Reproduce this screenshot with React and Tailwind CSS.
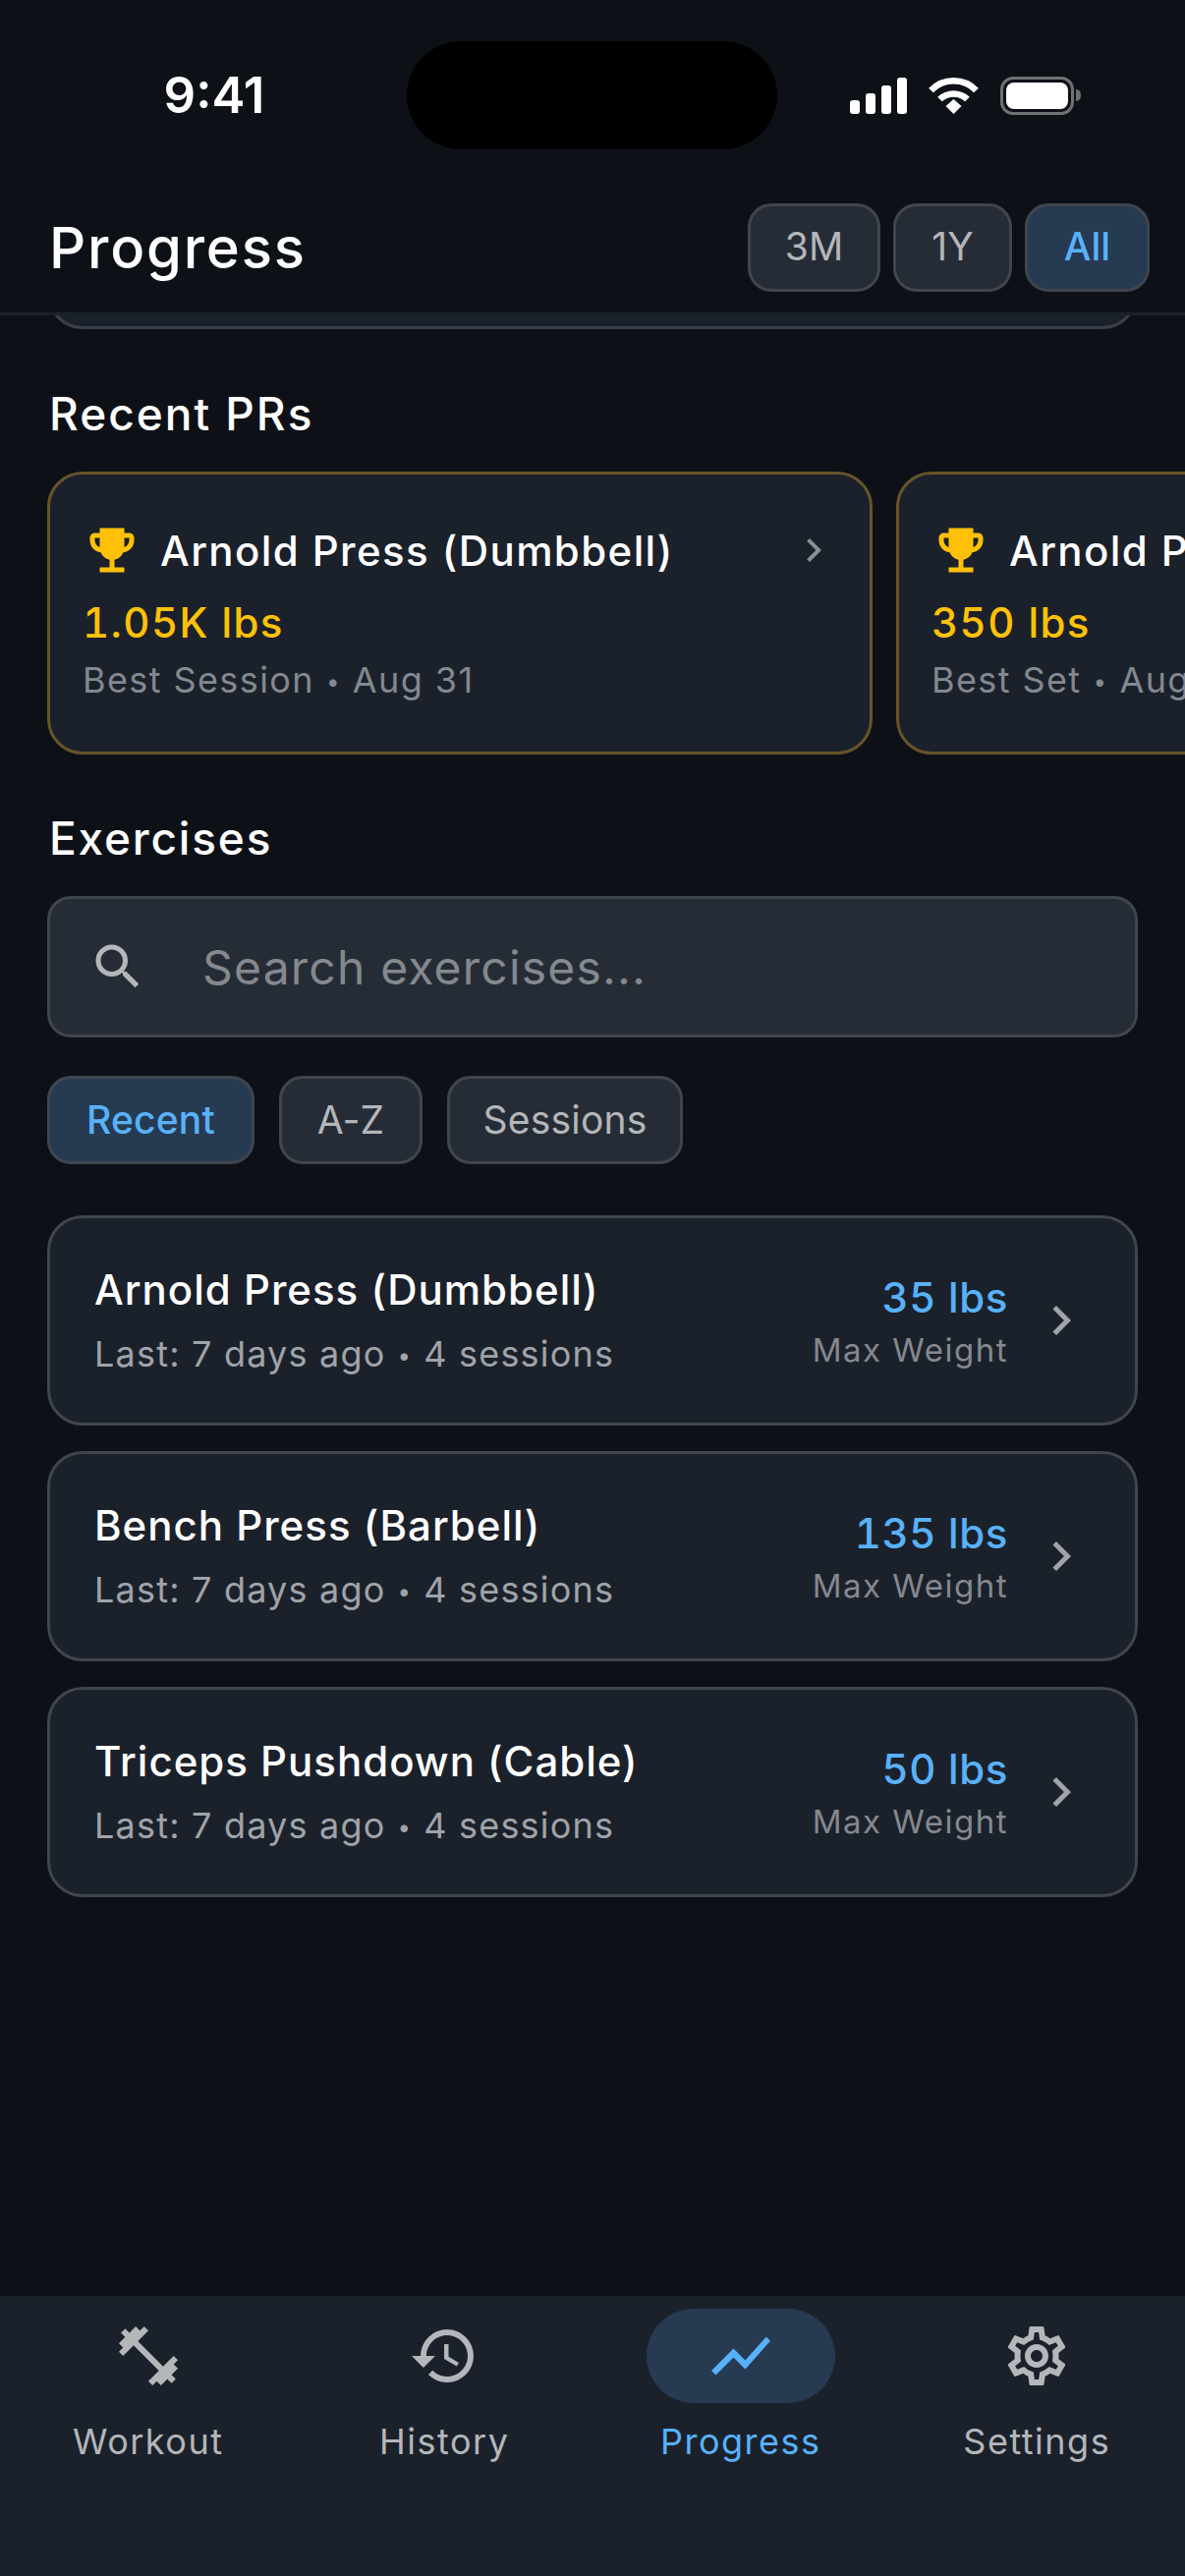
import { MdChevronRight, MdEmojiEvents, MdFitnessCenter, MdHistory, MdOutlineSettings, MdSearch, MdShowChart } from "react-icons/md";

const exercises = [
  { name: "Arnold Press (Dumbbell)", weight: "35 lbs" },
  { name: "Bench Press (Barbell)", weight: "135 lbs" },
  { name: "Triceps Pushdown (Cable)", weight: "50 lbs" },
];

const tabs = [
  { label: "Workout", Icon: MdFitnessCenter },
  { label: "History", Icon: MdHistory },
  { label: "Progress", Icon: MdShowChart, active: true },
  { label: "Settings", Icon: MdOutlineSettings },
];

function Dot() {
  return <span className="text-[24px] align-[3px] mx-[12px]">•</span>;
}

function StatusIcons() {
  return (
    <div className="flex items-center gap-[22px]">
      <svg width="58" height="37" viewBox="0 0 58 37" fill="#fff">
        <rect x="0" y="23" width="10" height="14" rx="3" />
        <rect x="16" y="16" width="10" height="21" rx="3" />
        <rect x="32" y="8" width="10" height="29" rx="3" />
        <rect x="48" y="0" width="10" height="37" rx="3" />
      </svg>
      <svg width="51" height="37" viewBox="0 0 51 37" fill="none">
        <path d="M2.5 13C15 0 36 0 48.5 13" stroke="#fff" strokeWidth="6.5" />
        <path d="M11.5 22C19 14.5 32 14.5 39.5 22" stroke="#fff" strokeWidth="6.5" />
        <path d="M17.5 29L25.5 22L33.5 29L25.5 37Z" fill="#fff" />
      </svg>
      <div className="flex items-center gap-[2px]">
        <div className="w-[75px] h-[39px] rounded-[13px] border-[3px] border-[#6e7074] p-[3px]">
          <div className="w-full h-full rounded-[8px] bg-white" />
        </div>
        <div className="w-[5px] h-[12px] rounded-r-full bg-[#6e7074]" />
      </div>
    </div>
  );
}

function RangeButton({ label, active, width }) {
  return (
    <button
      className={`h-[90px] ${width} rounded-[24px] border-[3px] border-[#40454e] text-[39px] pb-[2px] ${
        active ? "bg-[#263a52] text-[#58b1f9] font-medium" : "bg-[#262c36] text-[#b4b6ba]"
      }`}
    >
      {label}
    </button>
  );
}

function PrCard({ value, sub, date }) {
  return (
    <div className="w-[840px] h-[288px] shrink-0 rounded-[36px] border-[3px] border-[#66542a] bg-[#1b212b] pl-[33px] pr-[33px] pt-[47px]">
      <div className="flex items-center h-[60px]">
        <MdEmojiEvents size={60} className="text-[#ffc107] shrink-0" />
        <span className="ml-[19px] text-[42px] font-medium text-white tracking-[1.4px] whitespace-nowrap">Arnold Press (Dumbbell)</span>
        <MdChevronRight size={48} className="ml-auto text-[#8b8f96] shrink-0" />
      </div>
      <p className="mt-[17px] text-[42px] leading-[54px] font-medium text-[#ffc107] tracking-[1.4px] tabular-nums whitespace-nowrap">{value}</p>
      <p className="mt-[7px] text-[36px] leading-[48px] text-[#84888f] tracking-[1.4px] whitespace-nowrap">
        {sub}
        <Dot />
        {date}
      </p>
    </div>
  );
}

function Chip({ label, active, width }) {
  return (
    <button
      className={`h-[90px] ${width} rounded-[24px] border-[3px] border-[#40454e] text-[39px] tracking-[0.2px] ${
        active ? "bg-[#263a52] text-[#58b1f9] font-medium" : "bg-[#262c36] text-[#b4b6ba]"
      }`}
    >
      {label}
    </button>
  );
}

export default function App() {
  return (
    <div className="w-[1206px] h-[2622px] overflow-hidden flex flex-col bg-[#0d1117] font-['Inter',sans-serif]">
      {/* header */}
      <div className="h-[321px] shrink-0 border-b-[3px] border-[#1c2128] pt-[42px]">
        <div className="h-[110px] flex items-center pl-[166px] pr-[106px]">
          <span className="w-[104px] text-[51px] font-semibold text-white text-center whitespace-nowrap">9:41</span>
          <div className="ml-[144px] w-[377px] h-[110px] rounded-full bg-black" />
          <div className="ml-auto">
            <StatusIcons />
          </div>
        </div>
        <div className="mt-[55px] flex items-center justify-between pl-[50px] pr-[36px]">
          <h1 className="text-[58px] font-medium text-white tracking-[1.8px]">Progress</h1>
          <div className="flex gap-[13px]">
            <RangeButton label="3M" width="w-[135px]" />
            <RangeButton label="1Y" width="w-[121px]" />
            <RangeButton label="All" active width="w-[127px]" />
          </div>
        </div>
      </div>

      {/* body */}
      <div className="flex-1 min-h-0 overflow-hidden">
        <div className="mx-[48px] h-[14px] overflow-hidden">
          <div className="-mt-[100px] h-[114px] rounded-[36px] border-[3px] border-[#3a3f49] bg-[#1b212b]" />
        </div>

        <h2 className="mt-[57px] pl-[50px] text-[46px] leading-[58px] font-medium text-white tracking-[2px]">Recent PRs</h2>
        <div className="mt-[30px] pl-[48px] flex gap-[24px] overflow-hidden">
          <PrCard value="1.05K lbs" sub="Best Session" date="Aug 31" />
          <PrCard value="350 lbs" sub="Best Set" date="Aug 31" />
        </div>

        <h2 className="mt-[56px] pl-[50px] text-[46px] leading-[58px] font-medium text-white tracking-[1.8px]">Exercises</h2>
        <div className="mt-[30px] mx-[48px] h-[144px] rounded-[24px] border-[3px] border-[#40454e] bg-[#262c36] flex items-center pl-[39px]">
          <MdSearch size={60} className="text-[#b4b6ba] shrink-0" />
          <span className="ml-[56px] pt-[2px] text-[48px] text-[#84888f] tracking-[1.2px]">Search exercises...</span>
        </div>
        <div className="mt-[39px] pl-[48px] flex gap-[25px]">
          <Chip label="Recent" active width="w-[211px]" />
          <Chip label="A-Z" width="w-[146px]" />
          <Chip label="Sessions" width="w-[240px]" />
        </div>

        <div className="mt-[52px] mx-[48px] flex flex-col gap-[26px]">
          {exercises.map((ex) => (
            <div key={ex.name} className="h-[214px] rounded-[36px] border-[3px] border-[#40454e] bg-[#1b212b] flex items-center pl-[45px] pr-[45px]">
              <div className="flex-1 min-w-0">
                <p className="text-[42px] leading-[56px] font-medium text-white tracking-[1px] whitespace-nowrap">{ex.name}</p>
                <p className="mt-[13px] text-[36px] leading-[48px] text-[#a0a3a8] tracking-[1.2px] whitespace-nowrap">
                  Last: 7 days ago
                  <Dot />
                  4 sessions
                </p>
              </div>
              <div className="text-right">
                <p className="text-[42px] leading-[56px] font-medium text-[#58b1f9] tracking-[0.6px] tabular-nums">{ex.weight}</p>
                <p className="mt-[3px] text-[33px] leading-[44px] text-[#84888f] tracking-[1.5px]">Max Weight</p>
              </div>
              <MdChevronRight size={60} className="ml-[24px] text-[#a0a3a8] shrink-0" />
            </div>
          ))}
        </div>
      </div>

      {/* tab bar */}
      <div className="h-[285px] shrink-0 border-t-[3px] border-[#1c2128] bg-[#1b212b] grid grid-cols-4 pt-[10px]">
        {tabs.map(({ label, Icon, active }) => (
          <div key={label} className="flex flex-col items-center">
            <div className={`w-[192px] h-[96px] rounded-full flex items-center justify-center ${active ? "bg-[#263a52]" : ""}`}>
              <Icon size={72} className={active ? "text-[#58b1f9]" : "text-[#b4b6ba]"} />
            </div>
            <span className={`mt-[15px] text-[36px] leading-[48px] tracking-[1.5px] ${active ? "text-[#58b1f9]" : "text-[#b4b6ba]"}`}>{label}</span>
          </div>
        ))}
      </div>
    </div>
  );
}
